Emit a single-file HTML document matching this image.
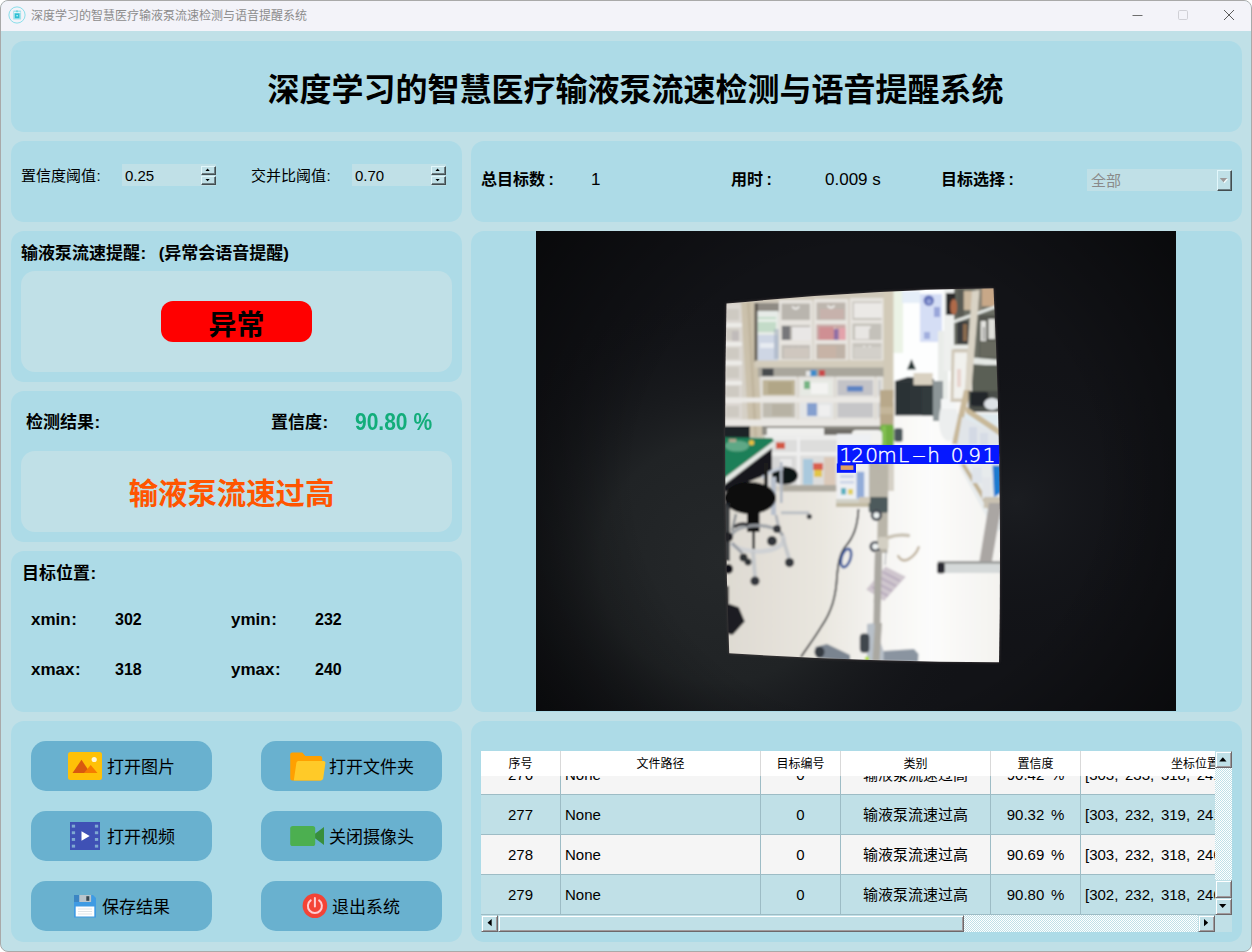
<!DOCTYPE html>
<html lang="zh-CN">
<head>
<meta charset="utf-8">
<title>深度学习的智慧医疗输液泵流速检测与语音提醒系统</title>
<style>
html,body{margin:0;padding:0;}
body{width:1252px;height:952px;overflow:hidden;background:#ffffff;position:relative;
  font-family:"Liberation Sans","Noto Sans CJK SC",sans-serif;color:#000;}
#win{position:absolute;left:0;top:0;width:1250px;height:950px;border:1px solid #a9a9a9;
  border-radius:8px;background:#c0e0e7;overflow:hidden;}
#tbar{position:absolute;left:0;top:0;width:1250px;height:30px;background:#f3f3f9;}
#tbar .ttl{position:absolute;left:30px;top:0;height:30px;line-height:30px;font-size:12px;color:#8c8c8c;white-space:nowrap;}
.abs{position:absolute;}
.panel{position:absolute;background:#addbe7;border-radius:13px;}
.inner{position:absolute;background:#c0e0e7;border-radius:14px;}
.t{position:absolute;white-space:nowrap;line-height:20px;height:20px;}
.b{font-weight:bold;}
.f15{font-size:15px;}
.f16{font-size:16px;}
.f17{font-size:17px;}
.c{padding-left:0.5px;padding-right:9.5px;}
.btn{position:absolute;width:181px;height:50px;border-radius:15px;background:#69b1cf;}
.btn svg{position:absolute;}
.btn .lbl{position:absolute;top:2px;height:50px;line-height:50px;font-size:17px;white-space:nowrap;}

.spin{position:absolute;width:94px;height:22px;background:#c0e0e7;}
.spin .v{position:absolute;left:3px;top:0;height:22px;line-height:23px;font-size:15px;}
.spin .ub,.spin .db{position:absolute;left:79px;width:15px;height:9px;box-sizing:border-box;background:#c0e0e7;
  border-top:1px solid #e2f7fb;border-left:1px solid #e2f7fb;border-right:1px solid #434d50;border-bottom:1px solid #434d50;box-shadow:inset -1px -1px 0 #6e8085;}
.spin .ub{top:2px}.spin .db{top:12px}
.spin svg{position:absolute;left:0;top:0}

#tbl{position:absolute;left:480px;top:750px;width:734px;height:164px;overflow:hidden;background:#c0e0e7;}
#tbl .hd{position:absolute;left:0;top:0;width:734px;height:25px;background:#ffffff;z-index:2;}
#tbl .hd div{position:absolute;top:0;height:25px;line-height:27px;font-size:12px;text-align:center;box-sizing:border-box;border-right:1px solid #d9d9d9;white-space:nowrap;}
#tbl .row{position:absolute;left:0;width:829px;height:40px;box-sizing:border-box;border-bottom:1px solid #9dbcc5;}
#tbl .row div{position:absolute;top:0;height:39px;line-height:39px;font-size:15px;box-sizing:border-box;border-right:1px solid #9dbcc5;white-space:nowrap;text-align:center;word-spacing:2.5px;}
#tbl .c1{left:0;width:80px}#tbl .c2{left:80px;width:200px}#tbl .c3{left:280px;width:80px}
#tbl .c4{left:360px;width:150px}#tbl .c5{left:510px;width:90px}#tbl .c6{left:600px;width:229px}
#tbl .row .c2,#tbl .row .c6{text-align:left;padding-left:4px;}
.ra{background:#f5f5f5}.rb{background:#c0e0e7}
.sb{position:absolute;box-sizing:border-box;background:#c0e0e7;border:1px solid;border-color:#c0e0e7 #6e686a #6e686a #c0e0e7;box-shadow:inset 1px 1px 0 #ffffff,inset -1px -1px 0 #a09a9c;}
.trk{position:absolute;background:repeating-conic-gradient(#ffffff 0 25%,#c0e0e7 0 50%) 0 0/2px 2px;}
</style>
</head>
<body>
<div id="win">
  <!-- title bar -->
  <div id="tbar">
    <svg class="abs" style="left:6px;top:4px" width="20" height="20" viewBox="0 0 20 20">
      <circle cx="10" cy="10" r="8.100" fill="none" stroke="#7fdbe8" stroke-width="0.900"/>
      <rect x="6.200" y="5.400" width="7.900" height="9.200" rx="0.600" fill="#a5e3ec"/>
      <rect x="7.850" y="8.400" width="4.550" height="4.800" fill="#2fc0d4"/>
      <rect x="9.600" y="5.300" width="0.800" height="2.600" fill="#2fc0d4"/>
      <rect x="7" y="7.300" width="6.400" height="0.700" fill="#ffffff"/>
      <circle cx="10.100" cy="10.700" r="0.700" fill="#ffffff"/>
    </svg>
    <div class="ttl">深度学习的智慧医疗输液泵流速检测与语音提醒系统</div>
    <svg class="abs" style="left:1120px;top:-1px" width="130" height="30" viewBox="0 0 130 30">
      <path d="M11.5 15.5h10" stroke="#6e6e6e" stroke-width="1" fill="none"/>
      <rect x="57.5" y="10.500" width="9" height="9" rx="1.2" fill="none" stroke="#d0d0d6" stroke-width="1"/>
      <path d="M103 10l10 10M113 10l-10 10" stroke="#5a5a5a" stroke-width="1" fill="none"/>
    </svg>
  </div>

  <!-- main title panel -->
  <div class="panel" style="left:10px;top:40px;width:1231px;height:91px"></div>
  <div class="t b" style="left:19px;top:65px;width:1231px;height:48px;line-height:48px;text-align:center;font-size:32px;">深度学习的智慧医疗输液泵流速检测与语音提醒系统</div>

  <!-- threshold panel -->
  <div class="panel" style="left:10px;top:140px;width:451px;height:81px"></div>

  <div class="t f15" style="left:20px;top:165px;">置信度阈值<span class="c">:</span></div>
  <div class="spin" style="left:121px;top:163px"><div class="v">0.25</div>
    <div class="ub"><svg width="13" height="7" viewBox="0 0 13 7"><path d="M3.500 3.900h4.200l-2.100-2.300z" fill="#000"/></svg></div>
    <div class="db"><svg width="13" height="7" viewBox="0 0 13 7"><path d="M3.500 1.900h4.200l-2.100 2.300z" fill="#000"/></svg></div></div>
  <div class="t f15" style="left:250px;top:165px;">交并比阈值<span class="c">:</span></div>
  <div class="spin" style="left:351px;top:163px"><div class="v">0.70</div>
    <div class="ub"><svg width="13" height="7" viewBox="0 0 13 7"><path d="M3.500 3.900h4.200l-2.100-2.300z" fill="#000"/></svg></div>
    <div class="db"><svg width="13" height="7" viewBox="0 0 13 7"><path d="M3.500 1.900h4.200l-2.100 2.300z" fill="#000"/></svg></div></div>
  <!-- stats panel -->
  <div class="panel" style="left:470px;top:140px;width:771px;height:81px"></div>

  <div class="t b f16" style="left:480px;top:169px;">总目标数<span class="c" style="padding-left:3.5px">:</span></div>
  <div class="t" style="left:590px;top:169px;font-size:17px">1</div>
  <div class="t b f16" style="left:730px;top:169px;">用时<span class="c" style="padding-left:3.5px">:</span></div>
  <div class="t" style="left:824px;top:169px;font-size:17px">0.009 s</div>
  <div class="t b f16" style="left:940px;top:169px;">目标选择<span class="c" style="padding-left:3.5px">:</span></div>
  <div class="abs" style="left:1086px;top:168px;width:145px;height:22px;background:#c0e0e7">
    <div class="t f15" style="left:4px;top:2px;color:#8a8a8a;">全部</div>
    <div class="abs" style="left:130px;top:1px;width:15px;height:21px;box-sizing:border-box;background:#c0e0e7;border-top:1px solid #e2f7fb;border-left:1px solid #e2f7fb;border-right:1px solid #434d50;border-bottom:1px solid #434d50;box-shadow:inset -1px -1px 0 #6e8085;">
      <svg class="abs" style="left:0;top:0" width="13" height="19" viewBox="0 0 13 19"><path d="M2.800 8h7.300l-3.650 4.200z" fill="#f4fbfc"/><path d="M1.800 7h7.300l-3.650 4.200z" fill="#9c9898"/></svg>
    </div>
  </div>
  <!-- alert panel -->
  <div class="panel" style="left:10px;top:230px;width:451px;height:151px"></div>

  <div class="t b f17" style="left:20px;top:243px;">输液泵流速提醒<span class="c" style="padding-right:12.5px">:</span>(异常会语音提醒)</div>
  <div class="inner" style="left:20px;top:270px;width:431px;height:101px"></div>
  <div class="abs b" style="left:160px;top:300px;width:151px;height:41px;border-radius:12px;background:#ff0000;text-align:center;line-height:49px;font-size:28px;">异常</div>
  <!-- result panel -->
  <div class="panel" style="left:10px;top:390px;width:451px;height:151px"></div>

  <div class="t b f17" style="left:25px;top:412px;">检测结果<span class="c">:</span></div>
  <div class="t b f17" style="left:270px;top:412px;">置信度<span class="c">:</span></div>
  <div class="t b" style="left:354px;top:411px;font-size:21px;color:#12ad7a;transform:scale(1,1.14);transform-origin:0 55%;">90.80 %</div>
  <div class="inner" style="left:20px;top:450px;width:431px;height:81px"></div>
  <div class="abs b" style="left:15px;top:450px;width:431px;height:81px;line-height:85px;text-align:center;font-size:29.4px;color:#ff5500;letter-spacing:0px;white-space:nowrap;">输液泵流速过高</div>
  <!-- position panel -->
  <div class="panel" style="left:10px;top:550px;width:451px;height:161px"></div>

  <div class="t b f17" style="left:21px;top:563px;">目标位置<span class="c">:</span></div>
  <div class="t b f17" style="left:30px;top:609px;">xmin<span class="c">:</span></div>
  <div class="t b f16" style="left:114px;top:609px;">302</div>
  <div class="t b f17" style="left:230px;top:609px;">ymin<span class="c">:</span></div>
  <div class="t b f16" style="left:314px;top:609px;">232</div>
  <div class="t b f17" style="left:30px;top:659px;">xmax<span class="c">:</span></div>
  <div class="t b f16" style="left:114px;top:659px;">318</div>
  <div class="t b f17" style="left:230px;top:659px;">ymax<span class="c">:</span></div>
  <div class="t b f16" style="left:314px;top:659px;">240</div>
  <!-- buttons panel -->
  <div class="panel" style="left:10px;top:720px;width:451px;height:221px"></div>

  <div class="btn" style="left:30px;top:740px"><svg style="left:37px;top:11px" width="34" height="28" viewBox="0 0 34 28"><rect x="0" y="0" width="34" height="28" rx="2.5" fill="#ffc107"/><path d="M4.500 21L13.500 7.800L22.300 21z" fill="#d9590f"/><path d="M16 21L22.700 13L29.500 21z" fill="#f57c00"/><circle cx="26.200" cy="7.500" r="2.600" fill="#fff6d8"/></svg><div class="lbl" style="left:76px">打开图片</div></div>
  <div class="btn" style="left:260px;top:740px"><svg style="left:29px;top:11px" width="36" height="29" viewBox="0 0 36 29"><path d="M2.200 0.400H12.300L15.300 4H30.200Q32.200 4 32.200 6V26Q32.200 28.400 30.200 28.400H2.200Q0.200 28.400 0.200 26.400V2.400Q0.200 0.400 2.200 0.400z" fill="#ffa000"/><path d="M8.400 9H33.600Q35.700 9 35.400 11L33.200 26.600Q32.900 28.400 31 28.400H3.800L6.400 10.800Q6.700 9 8.400 9z" fill="#ffca28"/></svg><div class="lbl" style="left:68px">打开文件夹</div></div>
  <div class="btn" style="left:30px;top:810px"><svg style="left:39px;top:11px" width="30" height="28" viewBox="0 0 30 28"><rect width="30" height="28" fill="#3f51b5"/><g fill="#7fa9d2"><rect x="1.800" y="2.700" width="3.300" height="2.900"/><rect x="1.800" y="9.300" width="3.300" height="2.900"/><rect x="1.800" y="16" width="3.300" height="2.900"/><rect x="1.800" y="22.700" width="3.300" height="2.900"/><rect x="24.900" y="2.700" width="3.300" height="2.900"/><rect x="24.900" y="9.300" width="3.300" height="2.900"/><rect x="24.900" y="16" width="3.300" height="2.900"/><rect x="24.900" y="22.700" width="3.300" height="2.900"/></g><path d="M11.500 9.200L19.700 14L11.500 18.800z" fill="#fff"/></svg><div class="lbl" style="left:76px">打开视频</div></div>
  <div class="btn" style="left:260px;top:810px"><svg style="left:29px;top:15px" width="35" height="21" viewBox="0 0 35 21"><path d="M22 10L34 1V19z" fill="#388e3c"/><rect x="0.200" y="0" width="25" height="20" rx="2.600" fill="#4caf50"/></svg><div class="lbl" style="left:68px">关闭摄像头</div></div>
  <div class="btn" style="left:30px;top:880px"><svg style="left:43px;top:14px" width="22" height="23" viewBox="0 0 22 23"><path d="M0 0H19L22 3V22.500H0z" fill="#3f9be3"/><rect x="0" y="0" width="5.300" height="7" fill="#3b86c4"/><rect x="5.300" y="0" width="11.800" height="7" fill="#b9c5cc"/><rect x="12.300" y="1.200" width="3" height="4.600" fill="#37474f"/><rect x="1.700" y="11.500" width="18.600" height="10" fill="#fff"/><path d="M4 14h14M4 16.500h14M4 19h14" stroke="#dfe5e8" stroke-width="1"/></svg><div class="lbl" style="left:71px">保存结果</div></div>
  <div class="btn" style="left:260px;top:880px"><svg style="left:41px;top:12px" width="26" height="26" viewBox="0 0 26 26"><circle cx="12.900" cy="12.800" r="12.300" fill="#f44336"/><path d="M8.700 7.400A7 7 0 1 0 17.100 7.400" fill="none" stroke="#ffcdd2" stroke-width="2" stroke-linecap="round"/><path d="M12.900 5V13.600" stroke="#ffcdd2" stroke-width="2" stroke-linecap="round"/></svg><div class="lbl" style="left:71px">退出系统</div></div>
  <!-- image panel -->
  <div class="panel" style="left:470px;top:230px;width:771px;height:481px"></div>
  <svg id="cam" class="abs" style="left:535px;top:230px" width="640" height="480" viewBox="0 0 640 480">
    <defs>
      <radialGradient id="vg1" gradientUnits="userSpaceOnUse" cx="185" cy="330" r="270">
        <stop offset="0" stop-color="#25282a"/><stop offset="0.45" stop-color="#202325"/><stop offset="1" stop-color="#121317" stop-opacity="0"/>
      </radialGradient>
      <radialGradient id="vg2" gradientUnits="userSpaceOnUse" cx="480" cy="270" r="170">
        <stop offset="0" stop-color="#1b1d21"/><stop offset="1" stop-color="#101116" stop-opacity="0"/>
      </radialGradient>
      <radialGradient id="vg3" gradientUnits="userSpaceOnUse" cx="330" cy="250" r="420">
        <stop offset="0.55" stop-color="#000" stop-opacity="0"/><stop offset="1" stop-color="#000" stop-opacity="0.55"/>
      </radialGradient>
      <linearGradient id="flr" gradientUnits="userSpaceOnUse" x1="190" y1="0" x2="462" y2="0">
        <stop offset="0" stop-color="#dedad2"/><stop offset="0.35" stop-color="#e9e6df"/><stop offset="0.58" stop-color="#f6f5f2"/><stop offset="0.75" stop-color="#fcfcfb"/><stop offset="1" stop-color="#f4f3f0"/>
      </linearGradient>
      <linearGradient id="cor" gradientUnits="userSpaceOnUse" x1="0" y1="183" x2="0" y2="300">
        <stop offset="0" stop-color="#dfe9ee"/><stop offset="0.5" stop-color="#eef4f6"/><stop offset="1" stop-color="#fbfcfc" stop-opacity="0"/>
      </linearGradient>
      <clipPath id="quad"><path d="M190.500 72.600Q330 59 457.500 57.300Q466.500 240 463 431.300Q327 430.700 193.200 422.200Q186.800 250 190.500 72.600z"/></clipPath>
      <filter id="bl" x="-5%" y="-5%" width="110%" height="110%"><feGaussianBlur stdDeviation="1.25"/></filter>
      <filter id="bl2" x="-5%" y="-5%" width="110%" height="110%"><feGaussianBlur stdDeviation="1.6"/></filter>
    </defs>
    <rect width="640" height="480" fill="#121317"/>
    <rect width="640" height="480" fill="url(#vg1)"/>
    <rect width="640" height="480" fill="url(#vg2)"/>
    <rect width="640" height="480" fill="url(#vg3)"/>
    <!-- soft glow edge of the bright photo -->
    <path d="M190.500 72.600Q330 59 457.500 57.300Q466.500 240 463 431.300Q327 430.700 193.200 422.200Q186.800 250 190.500 72.600z" fill="#6a5a5a" filter="url(#bl2)" opacity="0.55"/>
    <g clip-path="url(#quad)">
    <g filter="url(#bl)">
      <rect x="180" y="50" width="300" height="400" fill="url(#flr)"/>
      <path d="M357 183H400L418 212L463 300V183z" fill="url(#cor)"/>
      <!-- shelf wall -->
      <rect x="186.0" y="55.0" width="172.0" height="205.0" fill="#d5d0c6"/>
      <rect x="188.0" y="73.0" width="18.0" height="127.0" fill="#dbd7d1"/>
      <rect x="188.0" y="92.0" width="18.0" height="4.0" fill="#ecebe8"/>
      <rect x="188.0" y="111.0" width="18.0" height="4.0" fill="#ecebe8"/>
      <rect x="188.0" y="130.0" width="18.0" height="4.0" fill="#ecebe8"/>
      <rect x="188.0" y="150.0" width="18.0" height="4.0" fill="#ecebe8"/>
      <rect x="188.0" y="168.0" width="18.0" height="4.0" fill="#ecebe8"/>
      <rect x="188.0" y="189.0" width="18.0" height="4.0" fill="#ecebe8"/>
      <rect x="190.0" y="78.0" width="13.0" height="11.0" fill="#c9c4bc" opacity="0.7"/>
      <rect x="190.0" y="98.0" width="13.0" height="11.0" fill="#c9c4bc" opacity="0.7"/>
      <rect x="190.0" y="117.0" width="13.0" height="11.0" fill="#c9c4bc" opacity="0.7"/>
      <rect x="190.0" y="136.0" width="13.0" height="11.0" fill="#c9c4bc" opacity="0.7"/>
      <rect x="190.0" y="155.0" width="13.0" height="11.0" fill="#c9c4bc" opacity="0.7"/>
      <rect x="190.0" y="175.0" width="13.0" height="11.0" fill="#c9c4bc" opacity="0.7"/>
      <rect x="196.0" y="100.0" width="7.0" height="10.0" fill="#b8b0b4" opacity="0.6"/>
      <path d="M205.0 71.0 L218.0 70.0 L226.5 206.0 L213.0 206.0 z" fill="#cbc1ac"/>
      <path d="M211.0 71.0 L213.5 71.0 L221.0 206.0 L218.5 206.0 z" fill="#b9ae97" opacity="0.7"/>
      <path d="M219.0 66.0 L348.0 60.0 L348.0 67.0 L219.0 72.5 z" fill="#cfc8b9"/>
      <rect x="219.0" y="72.0" width="25.0" height="10.0" fill="#8f8b84"/>
      <rect x="218.5" y="72.0" width="3.5" height="59.0" fill="#5b574f"/>
      <rect x="221.5" y="80.0" width="21.1" height="51.0" fill="#e6ebe7"/>
      <rect x="222.0" y="86.0" width="18.0" height="15.0" fill="#b7d6bd" opacity="0.75"/>
      <rect x="222.0" y="88.0" width="18.0" height="3.0" fill="#eef2ee" opacity="0.8"/>
      <rect x="222.0" y="104.0" width="20.0" height="26.0" fill="#c3cde3" opacity="0.7"/>
      <rect x="224.0" y="112.0" width="14.0" height="5.0" fill="#eef0f4" opacity="0.8"/>
      <rect x="238.0" y="98.0" width="5.0" height="30.0" fill="#9aa6b8" opacity="0.5"/>
      <rect x="243.0" y="69.0" width="33.5" height="60.5" fill="#e7e4df"/>
      <rect x="245.5" y="72.5" width="28.5" height="16.5" fill="#b9b5ae"/>
      <path d="M256.2 75.5 q3.5 4.500 7 0" fill="none" stroke="#f3f2ef" stroke-width="1.800"/>
      <rect x="245.5" y="94.5" width="28.5" height="14.5" fill="#b4b0aa"/>
      <path d="M256.2 97.5 q3.5 4.500 7 0" fill="none" stroke="#f3f2ef" stroke-width="1.800"/>
      <rect x="245.5" y="114.0" width="28.5" height="14.0" fill="#c2beb7"/>
      <path d="M256.2 117.0 q3.5 4.500 7 0" fill="none" stroke="#f3f2ef" stroke-width="1.800"/>
      <rect x="278.0" y="68.0" width="34.0" height="61.5" fill="#e7e4df"/>
      <rect x="280.5" y="71.5" width="29.0" height="17.5" fill="#bdb6ae"/>
      <path d="M291.5 74.5 q3.5 4.500 7 0" fill="none" stroke="#f3f2ef" stroke-width="1.800"/>
      <rect x="280.5" y="93.5" width="29.0" height="15.5" fill="#c9a9a6"/>
      <path d="M291.5 96.5 q3.5 4.500 7 0" fill="none" stroke="#f3f2ef" stroke-width="1.800"/>
      <rect x="280.5" y="113.0" width="29.0" height="15.0" fill="#bfb3a8"/>
      <path d="M291.5 116.0 q3.5 4.500 7 0" fill="none" stroke="#f3f2ef" stroke-width="1.800"/>
      <rect x="314.0" y="67.0" width="34.0" height="62.5" fill="#e7e4df"/>
      <rect x="316.5" y="70.5" width="29.0" height="18.5" fill="#c6c3bc"/>
      <path d="M327.5 73.5 q3.5 4.500 7 0" fill="none" stroke="#f3f2ef" stroke-width="1.800"/>
      <rect x="316.5" y="92.5" width="29.0" height="16.5" fill="#c4c1ba"/>
      <path d="M327.5 95.5 q3.5 4.500 7 0" fill="none" stroke="#f3f2ef" stroke-width="1.800"/>
      <rect x="316.5" y="112.0" width="29.0" height="16.0" fill="#c8c5be"/>
      <path d="M327.5 115.0 q3.5 4.500 7 0" fill="none" stroke="#f3f2ef" stroke-width="1.800"/>
      <rect x="246.0" y="95.0" width="8.0" height="14.0" fill="#77777a"/>
      <rect x="256.0" y="96.0" width="19.0" height="13.0" fill="#e9e7e6"/>
      <rect x="283.0" y="96.0" width="15.0" height="13.0" fill="#cf8f93"/>
      <rect x="298.0" y="98.0" width="4.5" height="11.0" fill="#8f6ea6"/>
      <rect x="303.0" y="97.0" width="6.5" height="12.0" fill="#e3a3ab"/>
      <rect x="284.0" y="78.0" width="24.0" height="10.0" fill="#c9b1ab" opacity="0.8"/>
      <rect x="318.0" y="72.0" width="28.0" height="15.0" fill="#ebe9e6"/>
      <rect x="319.0" y="95.0" width="14.0" height="13.0" fill="#e8e6e3"/>
      <rect x="248.0" y="117.0" width="25.0" height="10.0" fill="#cfc7bf"/>
      <rect x="283.0" y="115.0" width="17.0" height="12.0" fill="#c7b3a6"/>
      <rect x="318.0" y="116.0" width="27.0" height="11.0" fill="#d3d0ca"/>
      <rect x="219.0" y="129.5" width="139.0" height="7.0" fill="#d3ccbc"/>
      <rect x="222.0" y="136.5" width="136.0" height="9.5" fill="#a9a69c"/>
      <rect x="226.0" y="137.5" width="11.5" height="8.0" fill="#474b4e"/>
      <rect x="270.0" y="140.0" width="5.0" height="5.0" fill="#e6e6e6"/>
      <rect x="274.5" y="139.0" width="6.0" height="6.5" fill="#3b8bcb"/>
      <rect x="283.0" y="139.0" width="6.0" height="6.5" fill="#c94a4a"/>
      <rect x="224.7" y="145.5" width="36.3" height="44.5" fill="#e4e2de"/>
      <rect x="226.7" y="149.0" width="32.3" height="15.5" fill="#bdb397"/>
      <rect x="226.7" y="171.5" width="32.3" height="15.0" fill="#bfbbb0"/>
      <rect x="262.4" y="145.5" width="36.1" height="44.5" fill="#e4e2de"/>
      <rect x="264.4" y="149.0" width="32.1" height="15.5" fill="#e6e9e3"/>
      <rect x="264.4" y="171.5" width="32.1" height="15.0" fill="#e3e5e6"/>
      <rect x="299.5" y="145.5" width="39.5" height="44.5" fill="#e4e2de"/>
      <rect x="301.5" y="149.0" width="35.5" height="15.5" fill="#c3c3c7"/>
      <rect x="301.5" y="171.5" width="35.5" height="15.0" fill="#c6c6c8"/>
      <rect x="340.0" y="145.5" width="7.0" height="44.5" fill="#e4e2de"/>
      <rect x="342.0" y="149.0" width="3.0" height="15.5" fill="#cfcfcf"/>
      <rect x="342.0" y="171.5" width="3.0" height="15.0" fill="#cfcfcf"/>
      <rect x="268.0" y="150.0" width="6.0" height="8.0" fill="#57a66a" opacity="0.8"/>
      <rect x="275.0" y="152.0" width="17.0" height="11.0" fill="#f3f3f1"/>
      <rect x="311.0" y="155.0" width="16.0" height="5.5" fill="#4a78c2" opacity="0.85"/>
      <rect x="271.0" y="172.0" width="10.0" height="13.0" fill="#5c83c4" opacity="0.7"/>
      <rect x="283.0" y="174.0" width="11.0" height="11.0" fill="#efefef"/>
      <rect x="232.0" y="151.0" width="24.0" height="12.0" fill="#a99d7d" opacity="0.6"/>
      <rect x="236.0" y="173.0" width="20.0" height="12.0" fill="#b3aea0" opacity="0.7"/>
      <rect x="186.0" y="166.5" width="172.0" height="5.0" fill="#eae8e4"/>
      <rect x="186.0" y="188.5" width="172.0" height="6.5" fill="#e9e7e3"/>
      <rect x="226.0" y="195.0" width="119.0" height="9.0" fill="#8e8c84"/>
      <rect x="231.0" y="197.0" width="57.0" height="7.5" fill="#efefed"/>
      <rect x="288.0" y="198.0" width="57.0" height="6.0" fill="#6f6d68"/>
      <rect x="229.0" y="204.0" width="73.0" height="51.0" fill="#dddddc"/>
      <rect x="229.0" y="204.0" width="73.0" height="5.0" fill="#ececeb"/>
      <rect x="231.0" y="221.0" width="70.0" height="3.5" fill="#efefee"/>
      <rect x="261.0" y="206.0" width="3.0" height="48.0" fill="#efefef"/>
      <rect x="240.0" y="211.4" width="9.0" height="6.4" fill="#d25643"/>
      <rect x="267.0" y="228.0" width="10.0" height="25.6" fill="#a9c9dd"/>
      <rect x="277.0" y="232.0" width="10.0" height="7.0" fill="#d9604f"/>
      <rect x="278.0" y="239.0" width="8.0" height="7.0" fill="#e2c546"/>
      <rect x="288.0" y="226.0" width="11.5" height="28.0" fill="#dbc9b9"/>
      <rect x="235.0" y="226.0" width="23.0" height="26.0" fill="#d6d6d6"/>
      <rect x="244.0" y="228.0" width="12.0" height="22.0" fill="#e9e9e9"/>
      <rect x="246.5" y="254.0" width="53.5" height="6.5" fill="#aeaaa0"/>
      <rect x="186.0" y="195.0" width="28.0" height="12.0" fill="#1e2428"/>
      <!-- window -->
      <rect x="357.0" y="55.0" width="59.0" height="95.0" fill="#fdfefe"/>
      <rect x="357.0" y="58.0" width="10.0" height="64.0" fill="#e3eedc" opacity="0.7"/>
      <rect x="384.0" y="63.0" width="22.0" height="48.0" fill="#c7d3f1" opacity="0.75"/>
      <circle cx="392.800" cy="69.500" r="5.200" fill="#4b5cab" opacity="0.85"/>
      <circle cx="393" cy="70.500" r="2.500" fill="#9aa6dc" opacity="0.9"/>
      <rect x="398.0" y="76.0" width="6.0" height="10.0" fill="#7f8fce" opacity="0.7"/>
      <rect x="388.0" y="101.0" width="6.0" height="7.0" fill="#7f8fce" opacity="0.6"/>
      <rect x="366.0" y="60.0" width="18.0" height="12.0" fill="#dfeaf6" opacity="0.8"/>
      <rect x="347.5" y="58.0" width="10.0" height="102.0" fill="#d2cab8"/>
      <rect x="344.0" y="159.0" width="13.5" height="36.0" fill="#b8a88a"/>
      <rect x="344.0" y="176.0" width="14.0" height="7.0" fill="#c4b69a"/>
      <rect x="402.0" y="100.0" width="10.0" height="70.0" fill="#e9ece9"/>
      <path d="M359.0 150.0 L372.0 146.0 L398.0 148.0 L398.0 184.5 L359.0 184.5 z" fill="#2e3438"/>
      <rect x="361.0" y="152.0" width="13.0" height="32.0" fill="#2a3036"/>
      <path d="M371.0 138.5 L375.5 128.0 L380.0 138.5 z" fill="#263634"/>
      <rect x="377.5" y="142.0" width="19.2" height="12.0" fill="#d9d1c1"/>
      <rect x="397.0" y="150.0" width="10.0" height="40.0" fill="#8d9698"/>
      <rect x="386.0" y="156.0" width="11.0" height="28.5" fill="#333a3e"/>
      <ellipse cx="412.500" cy="189" rx="9.500" ry="21" fill="#eceeee"/>
      <rect x="405.0" y="168.0" width="15.0" height="10.0" fill="#f4f6f6"/>
      <!-- right shelves -->
      <rect x="408.0" y="55.0" width="62.0" height="85.0" fill="#eef0ee"/>
      <rect x="418.0" y="55.0" width="52.0" height="85.0" fill="#6b6d64"/>
      <rect x="409.9" y="62.0" width="9.6" height="22.0" fill="#2a2c2c"/>
      <ellipse cx="417.700" cy="76" rx="3.400" ry="8" fill="#b06a48"/>
      <rect x="421.0" y="58.0" width="7.0" height="28.0" fill="#585a52"/>
      <rect x="427.8" y="60.0" width="11.2" height="19.0" fill="#cbb9a0"/>
      <rect x="445.7" y="57.0" width="13.3" height="18.5" fill="#c8a888"/>
      <rect x="439.0" y="58.0" width="7.0" height="22.0" fill="#8a8476"/>
      <rect x="421.0" y="90.0" width="11.5" height="23.0" fill="#3a3e3c"/>
      <rect x="427.0" y="93.0" width="4.0" height="17.0" fill="#8a6a50"/>
      <path d="M417.7 89.2 L466.0 72.0 L466.0 75.0 L417.7 92.2 z" fill="#e8ece8"/>
      <rect x="443.0" y="84.0" width="27.0" height="43.0" fill="#55574f"/>
      <rect x="444.6" y="90.0" width="5.4" height="20.0" fill="#e3e3df"/>
      <rect x="452.4" y="88.0" width="6.6" height="20.0" fill="#e0e0db"/>
      <rect x="447.0" y="96.0" width="1.5" height="13.0" fill="#4a4a46" opacity="0.6"/>
      <rect x="444.0" y="110.0" width="18.0" height="16.0" fill="#6f7166" opacity="0.7"/>
      <path d="M436.7 126.5 L468.0 129.5 L468.0 135.5 L436.7 133.0 z" fill="#e4e8e4"/>
      <rect x="436.0" y="134.0" width="34.0" height="28.0" fill="#5a5e54"/>
      <rect x="414.4" y="113.8" width="18.6" height="4.5" fill="#eceeea"/>
      <path d="M415.5 118.3 L433.4 118.3 L431.5 171.0 L414.5 171.0 z" fill="#d0c8b8"/>
      <path d="M418.5 121.5 L431.0 121.5 L429.5 167.5 L417.5 167.5 z" fill="#f1f1ed"/>
      <rect x="421.0" y="138.0" width="4.0" height="18.0" fill="#e0b8b0" opacity="0.5"/>
      <path d="M436.0 60.0 L443.5 59.0 L434.5 170.0 L428.0 170.0 z" fill="#d9d3c5"/>
      <path d="M428.0 159.0 L434.5 159.0 L421.5 213.0 L416.0 213.0 z" fill="#c8b89a"/>
      <rect x="432.5" y="160.0" width="37.5" height="21.0" fill="#4a4e48"/>
      <rect x="434.5" y="160.8" width="17.9" height="14.5" fill="#23262a" rx="3"/>
      <ellipse cx="456" cy="173" rx="8" ry="6" fill="#dde1e5"/>
      <path d="M426.0 186.0 L470.0 206.0 L470.0 214.0 L421.0 214.0 z" fill="#e1e5e9"/>
      <path d="M430.0 175.6 L470.0 202.0 L470.0 209.0 L430.0 182.0 z" fill="#c8b898"/>
      <rect x="433.0" y="196.0" width="8.0" height="17.0" fill="#cfd6e2" opacity="0.8"/>
      <rect x="444.0" y="202.0" width="8.0" height="12.0" fill="#d3d9e4" opacity="0.8"/>
      <path d="M422.0 233.0 L470.0 233.0 L470.0 300.0 L458.0 300.0 z" fill="#e7ebec"/>
      <path d="M424.8 233.0 L429.0 233.0 L459.0 281.0 L455.0 283.0 z" fill="#c1b191"/>
      <rect x="436.0" y="236.0" width="10.0" height="16.0" fill="#dfe4ea"/>
      <rect x="446.0" y="246.0" width="9.0" height="22.0" fill="#e3e6ea"/>
      <path d="M456.5 234.4 L465.0 234.4 L465.0 262.0 L458.0 266.0 z" fill="#1a7ad0"/>
      <rect x="447.8" y="266.0" width="22.2" height="11.0" fill="#c9c1b1"/>
      <path d="M453.0 272.0 L466.0 272.0 L456.0 330.0 L443.5 330.0 z" fill="#aaa6a3"/>
      <rect x="401.8" y="330.3" width="68.2" height="11.7" fill="#d5d9d9"/>
      <rect x="401.8" y="330.3" width="68.2" height="2.2" fill="#8c8c8a"/>
      <rect x="401.0" y="331.6" width="7.8" height="10.9" fill="#2a2c30" rx="2.500"/>
      <rect x="344.3" y="193.5" width="13.4" height="22.5" fill="#70b040" rx="2.500"/>
      <rect x="346.0" y="195.0" width="4.0" height="20.0" fill="#8cc65a" opacity="0.7"/>
      <rect x="358.3" y="197.3" width="8.3" height="13.5" fill="#4a545a" rx="2"/>
      <!-- white cart -->
      <rect x="316.0" y="199.0" width="30.0" height="17.0" fill="#f1f1ef" rx="4"/>
      <rect x="300.8" y="203.0" width="34.2" height="69.0" fill="#eef0f3"/>
      <rect x="333.0" y="214.0" width="11.0" height="62.0" fill="#b9b5a9"/>
      <rect x="320.6" y="240.8" width="7.6" height="26.8" fill="#7b9bd1" opacity="0.8"/>
      <rect x="305.0" y="257.0" width="5.0" height="6.5" fill="#5ab0c0"/>
      <rect x="312.0" y="258.0" width="5.0" height="5.5" fill="#e0d060"/>
      <rect x="304.0" y="244.0" width="14.0" height="3.0" fill="#c9d3e6"/>
      <rect x="304.0" y="250.0" width="14.0" height="2.5" fill="#c9d3e6"/>
      <rect x="300.0" y="268.0" width="37.0" height="7.0" fill="#d2d2c8"/>
      <rect x="300.0" y="272.0" width="37.0" height="4.0" fill="#c3bba4"/>
      <!-- green table -->
      <path d="M186.0 262.0 L186.0 250.0 L236.0 216.0 L236.0 242.0 L222.0 247.0 z" fill="#14171a"/>
      <path d="M186.0 206.3 L236.2 207.0 L238.0 210.0 L186.0 249.0 z" fill="#1c7f58"/>
      <ellipse cx="201" cy="215" rx="12" ry="5.500" fill="#8cc3a5" opacity="0.6"/>
      <circle cx="215.500" cy="211.700" r="2.600" fill="#e8c040"/>
      <rect x="193.0" y="208.0" width="7.0" height="3.0" fill="#e8b0a0" opacity="0.7"/>
      <path d="M238.0 210.0 L238.0 215.5 L186.0 255.5 L186.0 249.0 z" fill="#e4e8e4"/>
      <!-- stools -->
      <ellipse cx="249" cy="244.600" rx="13" ry="9" fill="#101214"/>
      <path d="M226 247 Q236 238 247 237.500" fill="none" stroke="#c4ccd8" stroke-width="3"/>
      <rect x="235.0" y="246.0" width="5.0" height="38.0" fill="#b8c0cc"/>
      <rect x="244.0" y="231.0" width="2.5" height="41.0" fill="#aeb6c2"/>
      <rect x="228.0" y="232.0" width="4.0" height="30.0" fill="#1a1c1e"/>
      <ellipse cx="214" cy="267" rx="26" ry="16" fill="#0c0e10"/>
      <rect x="211.0" y="279.0" width="12.5" height="22.0" fill="#0c0e10"/>
      <rect x="216.4" y="300.0" width="2.6" height="20.0" fill="#1a1c1e"/>
      <path d="M195.500 307 A25.500 11.500 0 0 1 246.500 305" fill="none" stroke="#9a9ea4" stroke-width="3.500" opacity="0.9"/>
      <path d="M195.500 312 A25.500 11.500 0 0 0 246.500 305" fill="none" stroke="#cfd1d4" stroke-width="4.600"/>
      <path d="M217 320 L219 346" stroke="#c4c7ca" stroke-width="3.800" fill="none"/>
      <path d="M246.500 306 L253.500 329" stroke="#c4c7ca" stroke-width="3.800" fill="none"/>
      <path d="M196 312 L206 322" stroke="#9a9ea4" stroke-width="3" fill="none"/>
      <path d="M240 284 L243 298" stroke="#b0b4ba" stroke-width="3" fill="none"/>
      <path d="M245 281.800 L273.300 281.800" stroke="#bcc0c4" stroke-width="3" fill="none"/>
      <path d="M200 283 L196 300" stroke="#8a8e92" stroke-width="2.500" fill="none"/>
      <path d="M198 296 Q205 291 212 294" stroke="#2a2c30" stroke-width="3" fill="none"/>
      <circle cx="219.0" cy="350.0" r="4.6" fill="#33363b"/>
      <circle cx="253.5" cy="331.6" r="4.6" fill="#34373c"/>
      <circle cx="273.3" cy="285.6" r="2.6" fill="#3a3c40"/>
      <circle cx="241.0" cy="298.0" r="4.0" fill="#35383c"/>
      <circle cx="236.0" cy="310.0" r="5.0" fill="#33363a"/>
      <circle cx="207.5" cy="326.5" r="4.0" fill="#2e3136"/>
      <circle cx="212.0" cy="331.0" r="3.5" fill="#2e3136"/>
      <circle cx="192.0" cy="338.0" r="5.0" fill="#0e1012"/>
      <circle cx="192.0" cy="306.0" r="5.0" fill="#15181b"/>
      <rect x="186.0" y="272.0" width="8.0" height="58.0" fill="#22262a" opacity="0.85"/>
      <!-- iv pole -->
      <path d="M342.5 233.0 L352.5 233.0 L351.5 322.0 L341.0 322.0 z" fill="#b9b5a9"/>
      <path d="M339.0 320.0 L346.0 320.0 L343.5 430.0 L336.5 430.0 z" fill="#aaa8a1"/>
      <rect x="332.8" y="266.0" width="19.2" height="15.8" fill="#4e5a5c" rx="2"/>
      <rect x="323.0" y="266.0" width="11.0" height="6.0" fill="#cfc8b8"/>
      <circle cx="340.4" cy="284.3" r="5.700" fill="#454a52"/>
      <circle cx="340.4" cy="284.3" r="3" fill="#f0f4f4"/>
      <circle cx="339.2" cy="315.6" r="5.700" fill="#454a52"/>
      <circle cx="339.2" cy="315.6" r="3" fill="#f0f4f4"/>
      <rect x="342.0" y="306.0" width="10.5" height="12.0" fill="#d3cfc3" rx="2"/>
      <path d="M352 306.500 Q362 303 372.400 304.500" fill="none" stroke="#c9c2b4" stroke-width="3.600" stroke-linecap="round"/>
      <path d="M362.200 325.200 Q366 331.500 372 328.500 Q380 324 382.600 316.300" fill="none" stroke="#c4b8a4" stroke-width="2.600" stroke-linecap="round"/>
      <path d="M350 320 L349 334" stroke="#8a9098" stroke-width="0.800" fill="none"/>
      <!-- paper -->
      <path d="M349.4 335.5 L369.8 345.7 L348.0 370.0 L330.2 358.5 z" fill="#cfc6ce"/>
      <path d="M347 341 L364 350 M343 346 L360 355 M339 351 L356 360 M336 356 L352 365" stroke="#a898b0" stroke-width="1.500" fill="none" opacity="0.7"/>
      <path d="M339.0 320.0 L346.0 320.0 L344.8 372.0 L337.8 372.0 z" fill="#aaa8a1"/>
      <!-- cable -->
      <path d="M322.500 278 C321.500 295 318 306 309 316 C303 324 302 335 301 345 C300 365 296 380 285.400 395.400 C278 408 270 418 265 426" fill="none" stroke="#16181c" stroke-width="1.700"/>
      <ellipse cx="310" cy="327" rx="4.500" ry="9.500" transform="rotate(18 310 327)" fill="none" stroke="#34549a" stroke-width="2.600"/>
      <!-- pole base -->
      <path d="M331.0 393.0 L338.0 392.0 L351.0 430.0 L331.0 430.0 z" fill="#b8c0c8"/>
      <rect x="323.8" y="402.5" width="9.6" height="19.2" fill="#40464e" rx="4"/>
      <path d="M279.4 416.0 L291.0 413.0 L314.0 424.0 L314.2 430.0 L281.0 427.0 z" fill="#7a8490"/>
      <ellipse cx="283.500" cy="421" rx="5" ry="5.500" fill="#353a42"/>
      <path d="M347.7 420.0 L378.0 418.0 L382.5 423.0 L382.0 431.0 L347.7 430.0 z" fill="#8a94a0"/>
      <path d="M339.0 392.0 L346.0 392.0 L343.5 430.0 L336.5 430.0 z" fill="#aaa8a1"/>
      <circle cx="331" cy="427.700" r="2.200" fill="#b0e020"/>
      <!-- black object -->
      <path d="M188.0 370.0 L192.0 372.6 L202.8 376.2 L208.8 390.6 L196.8 403.7 L188.0 402.5 z" fill="#1a1f20"/>
      <rect x="186.0" y="355.0" width="7.0" height="17.0" fill="#1a1c1f" opacity="0.8"/>
    </g>
    </g>
    <rect x="301.500" y="214" width="161.700" height="19" fill="#0618ff"/>
    <rect x="300.800" y="232.500" width="19.200" height="9.300" fill="#0618ff"/>
    <rect x="304.600" y="234.400" width="12.800" height="4.500" fill="#e0a060"/>
    <text y="231.200" text-anchor="middle" font-family="'DejaVu Sans Light','DejaVu Sans','Liberation Sans',sans-serif" font-weight="200" font-size="20" fill="#ffffff" stroke="#ffffff" stroke-width="0.400" xml:space="preserve"><tspan x="309.8">1</tspan><tspan x="321.5">2</tspan><tspan x="335.5">0</tspan><tspan x="351.1">m</tspan><tspan x="367.5">L</tspan><tspan x="383.0" textLength="15" lengthAdjust="spacingAndGlyphs">-</tspan><tspan x="400.8">h </tspan><tspan x="421.0">0</tspan><tspan x="430.0">.</tspan><tspan x="438.5">9</tspan><tspan x="453.2">1</tspan></text>
  </svg>
  <!-- table panel -->
  <div class="panel" style="left:470px;top:720px;width:771px;height:221px"></div>

  <div id="tbl">
    <div class="hd"><div class="c1">序号</div><div class="c2">文件路径</div><div class="c3">目标编号</div><div class="c4">类别</div><div class="c5">置信度</div><div class="c6">坐标位置</div></div>
    <div class="row ra" style="top:4px"><div class="c1">276</div><div class="c2">None</div><div class="c3">0</div><div class="c4">输液泵流速过高</div><div class="c5">90.42 %</div><div class="c6">[303, 233, 318, 241]</div></div>
    <div class="row rb" style="top:44px"><div class="c1">277</div><div class="c2">None</div><div class="c3">0</div><div class="c4">输液泵流速过高</div><div class="c5">90.32 %</div><div class="c6">[303, 232, 319, 241]</div></div>
    <div class="row ra" style="top:84px"><div class="c1">278</div><div class="c2">None</div><div class="c3">0</div><div class="c4">输液泵流速过高</div><div class="c5">90.69 %</div><div class="c6">[303, 232, 318, 240]</div></div>
    <div class="row rb" style="top:124px"><div class="c1">279</div><div class="c2">None</div><div class="c3">0</div><div class="c4">输液泵流速过高</div><div class="c5">90.80 %</div><div class="c6">[302, 232, 318, 240]</div></div>
  </div>
  <!-- vertical scrollbar -->
  <div class="trk" style="left:1214px;top:750px;width:17px;height:164px"></div>
  <div class="sb" style="left:1214px;top:750px;width:17px;height:17px"><svg class="abs" style="left:0;top:0" width="14" height="14" viewBox="0 0 14 14"><path d="M3.200 9.400h7.300l-3.650-4.200z" fill="#000"/></svg></div>
  <div class="sb" style="left:1214px;top:879px;width:17px;height:18px"></div>
  <div class="sb" style="left:1214px;top:897px;width:17px;height:17px"><svg class="abs" style="left:0;top:0" width="14" height="14" viewBox="0 0 14 14"><path d="M3 4.900h7.300l-3.650 4.200z" fill="#000"/></svg></div>
  <!-- horizontal scrollbar -->
  <div class="trk" style="left:480px;top:914px;width:734px;height:17px"></div>
  <div class="sb" style="left:480px;top:914px;width:17px;height:17px"><svg class="abs" style="left:0;top:0" width="14" height="14" viewBox="0 0 14 14"><path d="M9.700 3v7.300l-4.200-3.650z" fill="#000"/></svg></div>
  <div class="sb" style="left:497px;top:914px;width:466px;height:17px"></div>
  <div class="sb" style="left:1197px;top:914px;width:17px;height:17px"><svg class="abs" style="left:0;top:0" width="14" height="14" viewBox="0 0 14 14"><path d="M5 3v7.300l4.200-3.650z" fill="#000"/></svg></div>
  <div class="abs" style="left:1214px;top:914px;width:17px;height:17px;background:#c0e0e7"></div>
</div>
</body>
</html>
